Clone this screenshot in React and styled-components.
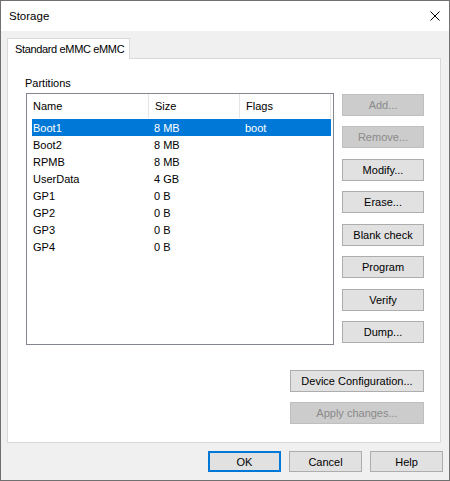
import React from 'react';
import styled, { createGlobalStyle } from 'styled-components';

const GlobalStyle = createGlobalStyle`
  * {
    box-sizing: border-box;
  }
  body {
    margin: 0;
    background: #ffffff;
    font-family: 'Liberation Sans', Arial, sans-serif;
    font-size: 11px;
    color: #000;
  }
`;

const Window = styled.div`
  width: 450px;
  height: 481px;
  border: 1px solid #707070;
  background: #f0f0f0;
  display: flex;
  flex-direction: column;
`;

const TitleBar = styled.div`
  height: 30px;
  background: #ffffff;
  display: flex;
  align-items: center;
  justify-content: space-between;
  padding: 0 9px 0 8px;
`;

const Title = styled.span`
  font-size: 11.5px;
`;

const Body = styled.div`
  flex: 1;
  display: flex;
  flex-direction: column;
  padding: 7px 6px 8px 6px;
`;

const TabStrip = styled.div`
  display: flex;
  height: 21px;
  margin-bottom: -1px;
  position: relative;
  z-index: 1;
`;

const Tab = styled.div`
  width: 123px;
  height: 21px;
  background: #ffffff;
  border: 1px solid #d9d9d9;
  border-bottom: none;
  padding-left: 7px;
  display: flex;
  align-items: center;
  white-space: nowrap;
  letter-spacing: -0.35px;
`;

const Panel = styled.div`
  width: 434px;
  height: 385px;
  background: #ffffff;
  border: 1px solid #d9d9d9;
  padding: 17px 0 0 17px;
`;

const Content = styled.div`
  width: 399px;
  display: flex;
  flex-direction: column;
`;

const GroupLabel = styled.div`
  line-height: 14px;
  height: 14px;
  margin-bottom: 3px;
`;

const Split = styled.div`
  display: flex;
`;

const ListView = styled.div`
  width: 308px;
  height: 252px;
  margin-left: 1px;
  border: 1px solid #828790;
  background: #ffffff;
`;

const HeaderRow = styled.div`
  display: flex;
  height: 24px;
  margin-bottom: 1px;
`;

const HeaderCell = styled.div`
  width: ${(p) => p.$w}px;
  height: 24px;
  padding-left: 6px;
  display: flex;
  align-items: center;
  border-right: 1px solid #e5e5e5;
`;

const Row = styled.div`
  display: flex;
  width: 299px;
  height: 17px;
  margin-left: 5px;
  align-items: center;
  background: ${(p) => (p.$selected ? '#0078d7' : 'transparent')};
  color: ${(p) => (p.$selected ? '#ffffff' : '#000000')};
`;

const Cell = styled.div`
  width: ${(p) => p.$w}px;
  padding-left: ${(p) => p.$pad}px;
  white-space: nowrap;
`;

const ButtonColumn = styled.div`
  display: flex;
  flex-direction: column;
  gap: 10.43px;
  margin: 1px 0 0 8px;
`;

const Button = styled.div`
  width: ${(p) => p.$w || 82}px;
  height: ${(p) => p.$h || 22}px;
  display: flex;
  align-items: center;
  justify-content: center;
  background: ${(p) => (p.$disabled ? '#cccccc' : '#e1e1e1')};
  border: ${(p) =>
    p.$default
      ? '2px solid #0078d7'
      : p.$disabled
      ? '1px solid #bfbfbf'
      : '1px solid #adadad'};
  color: ${(p) => (p.$disabled ? '#8a8a8a' : '#000000')};
  white-space: nowrap;
`;

const LowerButtons = styled.div`
  align-self: flex-end;
  display: flex;
  flex-direction: column;
  gap: 10px;
  margin-top: 25px;
`;

const Footer = styled.div`
  display: flex;
  justify-content: flex-end;
  gap: 8px;
  margin-top: 8px;
`;

const CloseIcon = () => (
  <svg width="10" height="10" viewBox="0 0 10 10">
    <path d="M0.5 0.5 L9.5 9.5 M9.5 0.5 L0.5 9.5" stroke="#000" strokeWidth="1" fill="none" />
  </svg>
);

const partitions = [
  { name: 'Boot1', size: '8 MB', flags: 'boot' },
  { name: 'Boot2', size: '8 MB', flags: '' },
  { name: 'RPMB', size: '8 MB', flags: '' },
  { name: 'UserData', size: '4 GB', flags: '' },
  { name: 'GP1', size: '0 B', flags: '' },
  { name: 'GP2', size: '0 B', flags: '' },
  { name: 'GP3', size: '0 B', flags: '' },
  { name: 'GP4', size: '0 B', flags: '' },
];

const actions = [
  { label: 'Add...', disabled: true },
  { label: 'Remove...', disabled: true },
  { label: 'Modify...' },
  { label: 'Erase...' },
  { label: 'Blank check' },
  { label: 'Program' },
  { label: 'Verify' },
  { label: 'Dump...' },
];

export default function App() {
  return (
    <>
      <GlobalStyle />
      <Window>
        <TitleBar>
          <Title>Storage</Title>
          <CloseIcon />
        </TitleBar>
        <Body>
          <TabStrip>
            <Tab>Standard eMMC eMMC</Tab>
          </TabStrip>
          <Panel>
            <Content>
              <GroupLabel>Partitions</GroupLabel>
              <Split>
                <ListView>
                  <HeaderRow>
                    <HeaderCell $w={122}>Name</HeaderCell>
                    <HeaderCell $w={91}>Size</HeaderCell>
                    <HeaderCell $w={91}>Flags</HeaderCell>
                  </HeaderRow>
                  {partitions.map((p, i) => (
                    <Row key={p.name} $selected={i === 0}>
                      <Cell $w={116} $pad={1}>{p.name}</Cell>
                      <Cell $w={91} $pad={6}>{p.size}</Cell>
                      <Cell $w={91} $pad={6}>{p.flags}</Cell>
                    </Row>
                  ))}
                </ListView>
                <ButtonColumn>
                  {actions.map((a) => (
                    <Button key={a.label} $disabled={a.disabled}>
                      {a.label}
                    </Button>
                  ))}
                </ButtonColumn>
              </Split>
              <LowerButtons>
                <Button $w={134}>Device Configuration...</Button>
                <Button $w={134} $disabled>Apply changes...</Button>
              </LowerButtons>
            </Content>
          </Panel>
          <Footer>
            <Button $w={73} $h={21} $default>OK</Button>
            <Button $w={73} $h={21}>Cancel</Button>
            <Button $w={73} $h={21}>Help</Button>
          </Footer>
        </Body>
      </Window>
    </>
  );
}
